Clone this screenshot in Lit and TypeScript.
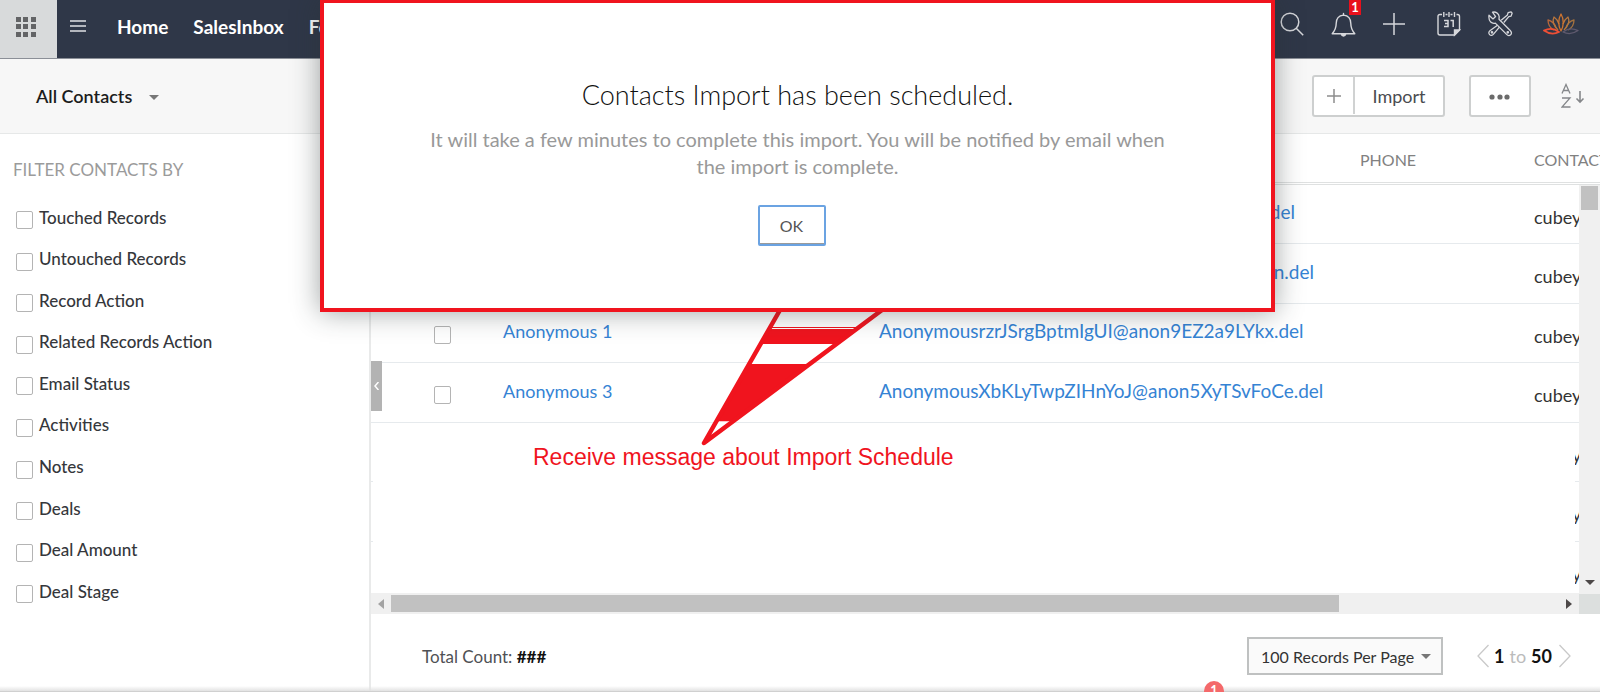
import { LitElement, html, css, svg } from "lit";
import { customElement } from "lit/decorators.js";
import { styleMap } from "lit/directives/style-map.js";

interface Contact {
  name: string;
  email: string;
  width: number;
}

const FILTERS = [
  "Touched Records",
  "Untouched Records",
  "Record Action",
  "Related Records Action",
  "Email Status",
  "Activities",
  "Notes",
  "Deals",
  "Deal Amount",
  "Deal Stage",
];

const CONTACTS: Contact[] = [
  { name: "", email: ".del", width: 416 },
  { name: "", email: "n.del", width: 435 },
  { name: "Anonymous 1", email: "AnonymousrzrJSrgBptmIgUI@anon9EZ2a9LYkx.del", width: 0 },
  { name: "Anonymous 3", email: "AnonymousXbKLyTwpZIHnYoJ@anon5XyTSvFoCe.del", width: 0 },
  { name: "", email: "", width: 0 },
  { name: "", email: "", width: 0 },
  { name: "", email: "", width: 0 },
];

const shared = css`
  * {
    box-sizing: border-box;
  }
  button,
  select,
  input {
    font: inherit;
    margin: 0;
  }
  button {
    display: flex;
    align-items: center;
    justify-content: center;
    padding: 0;
    border: 0;
    background: none;
    color: inherit;
  }
  a {
    color: inherit;
    text-decoration: none;
  }
  svg {
    display: block;
  }
  .check {
    appearance: none;
    flex: none;
    display: block;
    width: 17px;
    height: 18px;
    border: 1px solid #b4b4b4;
    border-radius: 2px;
    background: #fff;
  }
`;

@customElement("crm-top-bar")
class CrmTopBar extends LitElement {
  static styles = [
    shared,
    css`
      :host {
        display: flex;
        height: 59px;
        background: #2f3748;
        border-bottom: 1px solid #8b8f97;
        color: #fff;
      }
      .apps {
        width: 57px;
        padding: 0 5px 4px 0;
        background: #d8dadb;
      }
      .menu {
        width: 42px;
        height: 52px;
      }
      .links {
        display: flex;
        flex: 1;
        gap: 25px;
        padding-left: 18px;
        line-height: 54px;
        font-size: 19px;
        font-weight: 700;
      }
      .tools {
        display: grid;
        grid-template-columns: 52px 50px 52px 58px 44px 78px;
        height: 48px;
      }
      .tools button {
        position: relative;
      }
      .badge {
        position: absolute;
        top: 0;
        right: 7px;
        width: 12px;
        height: 15px;
        background: #e8101c;
        font-size: 13px;
        line-height: 15px;
        font-weight: 700;
        text-align: center;
      }
    `,
  ];

  render() {
    const cells = [0, 7, 15];
    return html`
      <button class="apps" aria-label="Applications">
        <svg width="20" height="20" fill="#636466">
          ${cells.map((y) => cells.map((x) => svg`<rect x=${x} y=${y} width="5" height="5" />`))}
        </svg>
      </button>
      <button class="menu" aria-label="Menu">
        <svg width="16" height="12" stroke="#e0e1e4" stroke-width="1.4">
          <path d="M0 1h16M0 6h16M0 11h16" />
        </svg>
      </button>
      <nav class="links">
        <a href="#home">Home</a>
        <a href="#salesinbox">SalesInbox</a>
        <a href="#feeds">Feeds</a>
      </nav>
      <div class="tools">
        <button aria-label="Search">
          <svg width="24" height="24" fill="none" stroke="#d6d7db" stroke-width="1.5">
            <circle cx="10" cy="10" r="8.8" />
            <path d="M16.2 16.2l7 7" />
          </svg>
        </button>
        <button aria-label="Notifications">
          <svg width="25" height="25" fill="none" stroke="#d6d7db" stroke-width="1.4">
            <path d="M12.5 1.5v1.6C7.500 3.600 5.200 7 5.200 11.500c0 5-1.200 7-4 10.200h22.600c-2.800-3.200-4-5.200-4-10.200 0-4.500-2.300-7.900-7.300-8.400z" stroke-linejoin="round" />
            <path d="M10.500 22.500c.3 2 3.700 2 4 0z" fill="#fff" />
          </svg>
          <span class="badge">1</span>
        </button>
        <button aria-label="Create">
          <svg width="22" height="22" stroke="#d6d7db" stroke-width="1.500"><path d="M11 0v22M0 11h22" /></svg>
        </button>
        <button aria-label="Calendar">
          <svg width="24" height="26" fill="none" stroke="#d6d7db" stroke-width="1.400">
            <path d="M5 3.500H3q-2 0-2 2V22q0 2 2 2h14.500l5-5V5.500q0-2-2-2h-1M8.500 3.500h2M13.500 3.500h2M6.800 1v5M12 1v5M17.500 1v5" />
            <path d="M17.500 24v-5h5z" fill="#d6d7db" />
            <path d="M7 9.500h4v6H7M8 12.400h3M13.500 9.500h2.700v6.500" stroke-width="1.500" />
          </svg>
        </button>
        <button aria-label="Setup">
          <svg width="26" height="26" viewBox="0 0 26 26" fill="none" stroke="#d6d7db" stroke-width="1.300" stroke-linejoin="round">
            <path d="M2 4.200l4 3.700 2.600-2.300L5.500 1.200c3-.8 6.500 1 6.700 4.600l-.2 2.400 11.200 11.300c1.700 1.700 1.500 3.200.4 4.300-1.200 1.100-2.700 1-4-.4L8.300 12.100c-3 .8-7.200-1-6.300-7.900z" />
            <path d="M14.200 9.200l6.200-5.300.7-2.200 3-.8 1 1.300-1 2.900-2.300.6-5 5.800M10.500 14.300l-7.300 5.200c-1.700 1.300-1.700 3-.6 4.100 1.200 1.200 2.800 1 3.900-.4l5.900-7" />
            <circle cx="5" cy="21.300" r=".7" /><circle cx="20.800" cy="21.300" r=".7" />
          </svg>
        </button>
        <button aria-label="Organization">
          <svg width="36" height="22" viewBox="0 0 36 22" fill="none" stroke-width="1.300" stroke-linejoin="round">
            <path d="M11 17C7 15 5 11 5 7c4 1 7 4 8 8" stroke="#b8683c" />
            <path d="M25 17c4-2 6-6 6-10-4 1-7 4-8 8" stroke="#a5733f" />
            <path d="M15 17C10 12 9 8 11 4c3 2 4 4 5 7" stroke="#b9763d" />
            <path d="M21 17c5-5 6-9 4-13-3 2-4 4-5 7" stroke="#b5783f" />
            <path d="M18 18c-3-5-3-12 0-17 3 5 3 12 0 17z" stroke="#d0752f" />
            <path d="M16 19C11 15 6 15 1 17.500c5 3.500 11 3.500 15 1.500z" stroke="#ee4f35" stroke-width="1.800" />
            <path d="M20 19c5-4 10-4 15-1.500-5 3.500-11 3.500-15 1.500z" stroke="#5f5a6e" />
          </svg>
        </button>
      </div>
    `;
  }
}

@customElement("crm-toolbar")
class CrmToolbar extends LitElement {
  static styles = [
    shared,
    css`
      :host {
        display: flex;
        align-items: center;
        justify-content: space-between;
        height: 75px;
        padding: 0 15px 0 36px;
        background: #f7f7f7;
        border-bottom: 1px solid #e6e8e8;
      }
      .view {
        gap: 17px;
        font-size: 18px;
        font-weight: 600;
        color: #1c1c1c;
      }
      .actions {
        display: flex;
        align-items: center;
      }
      .split {
        display: flex;
        height: 42px;
        border: 2px solid #cdcfcf;
        border-radius: 3px;
        background: #fff;
      }
      .plus {
        width: 41px;
        height: 37px;
        border-right: 2px solid #d0d2d2;
      }
      .import {
        width: 88px;
        font-size: 18px;
        color: #4a4c50;
      }
      .more {
        width: 62px;
        height: 42px;
        margin: 0 30px 0 24px;
        border: 2px solid #cdcfcf;
        border-radius: 3px;
        background: #fff;
      }
    `,
  ];

  render() {
    return html`
      <button class="view">
        All Contacts
        <svg width="10" height="8"><path d="M0 3h10l-5 5z" fill="#777" /></svg>
      </button>
      <div class="actions">
        <div class="split">
          <button class="plus" aria-label="Create contact">
            <svg width="14" height="14" stroke="#8d8d8d" stroke-width="1.500"><path d="M7 0v14M0 7h14" /></svg>
          </button>
          <button class="import">Import</button>
        </div>
        <button class="more" aria-label="More actions">
          <svg width="22" height="8" fill="#6b6b6b">
            <circle cx="3" cy="5" r="2.600" /><circle cx="11" cy="5" r="2.600" /><circle cx="18" cy="5" r="2.600" />
          </svg>
        </button>
        <button aria-label="Sort">
          <svg width="24" height="26" fill="none" stroke="#85878a" stroke-width="1.300">
            <path d="M1 10.500L5 1.500l4 9M2.500 7.500h5M1 15h8l-8 9h8.500" />
            <path d="M19 8v11M15.500 15.500l3.500 3.500 3.500-3.500" stroke-width="1.600" />
          </svg>
        </button>
      </div>
    `;
  }
}

@customElement("crm-filters")
class CrmFilters extends LitElement {
  static styles = [
    shared,
    css`
      :host {
        display: block;
        width: 371px;
        border-right: 2px solid #e9eaea;
        background: #fff;
      }
      .title {
        margin: 0;
        padding: 24px 13px;
        font-size: 17px;
        line-height: 24px;
        font-weight: 400;
        color: #9b9b9b;
      }
      .list {
        display: grid;
        grid-auto-rows: 1fr;
        height: 416px;
        margin: 0;
        padding: 0 16px;
        list-style: none;
      }
      .item {
        display: flex;
        align-items: center;
        gap: 6px;
        font-size: 17px;
        line-height: 20px;
        font-weight: 500;
        color: #35373b;
      }
      .item .check {
        margin-top: 5px;
      }
    `,
  ];

  render() {
    return html`
      <h2 class="title">FILTER CONTACTS BY</h2>
      <ul class="list">
        ${FILTERS.map(
          (label) => html`<li><label class="item"><input class="check" type="checkbox" />${label}</label></li>`
        )}
      </ul>
    `;
  }
}

@customElement("crm-contacts")
class CrmContacts extends LitElement {
  static styles = [
    shared,
    css`
      :host {
        position: relative;
        display: flex;
        flex-direction: column;
        flex: 1;
        min-width: 0;
        background: #fff;
      }
      .scroller {
        flex: 1;
        min-height: 0;
        overflow: hidden;
      }
      .grid {
        width: 1400px;
        border-collapse: separate;
        border-spacing: 0;
        table-layout: fixed;
      }
      .c-check { width: 132px; }
      .c-name { width: 376px; }
      .c-email { width: 481px; }
      .c-phone { width: 174px; }
      th {
        height: 51px;
        padding: 2px 0 0;
        border-bottom: 3px double #dfe1e1;
        font-size: 16px;
        font-weight: 400;
        text-align: left;
        color: #818181;
        white-space: nowrap;
      }
      td {
        height: 59px;
        padding: 0 0 4px;
        border-bottom: 1px solid #e6eaed;
        font-size: 18px;
        line-height: 24px;
        white-space: nowrap;
        color: #333;
      }
      tr:nth-child(even) td {
        height: 60px;
      }
      td .check {
        margin: 8px 0 0 63px;
      }
      .link {
        color: #3583d4;
      }
      .mail {
        font-size: 19px;
      }
      .tail {
        display: inline-block;
        text-align: right;
      }
      td.owner {
        padding: 5px 0 0;
      }
      .vbar {
        position: absolute;
        top: 51px;
        right: 0;
        bottom: 98px;
        display: flex;
        flex-direction: column;
        justify-content: space-between;
        align-items: center;
        width: 21px;
        padding: 1px 0 9px;
        background: #f0f0f0;
      }
      .vthumb {
        width: 17px;
        height: 24px;
        background: #c1c1c1;
      }
      .hbar {
        display: flex;
        align-items: center;
        height: 21px;
        background: #f0f0f0;
      }
      .left {
        margin: 0 7px;
      }
      .htrack {
        flex: 1;
      }
      .hthumb {
        width: 81%;
        height: 17px;
        background: #c1c1c1;
      }
      .right {
        margin: 0 7px 0 5px;
      }
      .corner {
        width: 21px;
        height: 21px;
        background: #dcdfde;
      }
      .collapse {
        position: absolute;
        top: 227px;
        left: 0;
        width: 11px;
        height: 50px;
        background: #b3b3b3;
      }
      .footer {
        display: flex;
        align-items: center;
        height: 78px;
        padding: 0 29px 0 51px;
        font-size: 17px;
        color: #4f5155;
      }
      .total {
        flex: 1;
        margin: 6px 0 0;
      }
      .total b,
      .pager b {
        color: #111;
      }
      .pick {
        position: relative;
        display: flex;
        align-items: center;
        margin: 6px 34px 0 0;
      }
      .pick select {
        appearance: none;
        width: 196px;
        height: 38px;
        padding: 0 12px;
        border: 2px solid #bfc1c1;
        border-radius: 0;
        background: #fafafa;
        font-size: 16px;
        color: #333;
      }
      .pick svg {
        position: absolute;
        right: 12px;
        pointer-events: none;
      }
      .pager {
        display: flex;
        align-items: center;
        gap: 5px;
        margin-top: 6px;
        font-size: 18px;
        color: #bbb;
      }
      .next {
        margin-left: 2px;
      }
    `,
  ];

  render() {
    return html`
      <div class="scroller">
        <table class="grid">
          <colgroup>
            <col class="c-check" /><col class="c-name" /><col class="c-email" /><col class="c-phone" /><col />
          </colgroup>
          <thead>
            <tr><th></th><th></th><th></th><th>PHONE</th><th>CONTACT</th></tr>
          </thead>
          <tbody>
            ${CONTACTS.map(
              (c) => html`<tr>
                <td><input class="check" type="checkbox" aria-label="Select contact" /></td>
                <td>${c.name ? html`<a class="link" href="#contact">${c.name}</a>` : ""}</td>
                <td>
                  ${c.width
                    ? html`<a class="link mail tail" href="#mail" style=${styleMap({ width: `${c.width}px` })}>${c.email}</a>`
                    : c.email
                      ? html`<a class="link mail" href="#mail">${c.email}</a>`
                      : ""}
                </td>
                <td></td>
                <td class="owner">cubey</td>
              </tr>`
            )}
          </tbody>
        </table>
      </div>
      <div class="vbar">
        <div class="vthumb"></div>
        <svg width="10" height="5"><path d="M0 0h10l-5 5z" fill="#4d4848" /></svg>
      </div>
      <div class="hbar">
        <svg class="left" width="6" height="10"><path d="M6 0v10L0 5z" fill="#a3a3a3" /></svg>
        <div class="htrack"><div class="hthumb"></div></div>
        <svg class="right" width="6" height="10"><path d="M0 0v10l6-5z" fill="#4d4848" /></svg>
        <div class="corner"></div>
      </div>
      <button class="collapse" aria-label="Collapse filters">
        <svg width="5" height="8" fill="none" stroke="#fff" stroke-width="1.500"><path d="M4.500 0L1 4l3.500 4" /></svg>
      </button>
      <div class="footer">
        <p class="total">Total Count: <b>###</b></p>
        <label class="pick">
          <select aria-label="Records per page"><option>100 Records Per Page</option></select>
          <svg width="10" height="5"><path d="M0 0h10l-5 5z" fill="#777" /></svg>
        </label>
        <div class="pager">
          <button aria-label="Previous page">
            <svg width="12" height="24" fill="none" stroke="#c9c9c9" stroke-width="1.300"><path d="M11.500 1L1 12l10.500 11" /></svg>
          </button>
          <b>1</b><span>to</span><b>50</b>
          <button class="next" aria-label="Next page">
            <svg width="12" height="24" fill="none" stroke="#c9c9c9" stroke-width="1.300"><path d="M.5 1L11 12 .5 23" /></svg>
          </button>
        </div>
      </div>
    `;
  }
}

@customElement("app-root")
class AppRoot extends LitElement {
  static styles = [
    shared,
    css`
      :host {
        position: relative;
        display: flex;
        flex-direction: column;
        height: 100vh;
        overflow: hidden;
        font-family: Lato, "Open Sans", sans-serif;
        background: #fff;
      }
      .body {
        display: flex;
        flex: 1;
        min-height: 0;
      }
      .edge {
        position: absolute;
        left: 0;
        right: 0;
        bottom: 0;
        height: 6px;
        background: linear-gradient(#fff0, #e2e2e2);
        border-bottom: 1px solid #d0d0d0;
      }
      .count {
        position: absolute;
        left: 1204px;
        bottom: -9px;
        width: 20px;
        height: 20px;
        border-radius: 50%;
        background: #f4696a;
        color: #fff;
        font-size: 13px;
        line-height: 18px;
        font-weight: 700;
        text-align: center;
      }
      .note {
        position: absolute;
        top: 423px;
        left: 373px;
        right: 25px;
        bottom: 100px;
        padding: 19px 0 0 160px;
        background: #fff;
        font-family: "Liberation Sans", Arial, sans-serif;
        font-size: 23px;
        line-height: 30px;
        color: #f0141e;
      }
      .pointer {
        position: absolute;
        top: 300px;
        left: 690px;
      }
      .dialog {
        position: absolute;
        top: 0;
        left: 20%;
        display: flex;
        flex-direction: column;
        align-items: center;
        width: 955px;
        height: 312px;
        padding: 73px 100px 0;
        border: 4px solid #f0141e;
        border-top-width: 3px;
        background: #fff;
        box-shadow: 0 0 26px rgba(40, 50, 50, 0.45);
        text-align: center;
      }
      .headline {
        margin: 0;
        font-size: 27px;
        line-height: 38px;
        font-weight: 300;
        color: #111;
      }
      .text {
        margin: 12px 0 25px;
        font-size: 20px;
        line-height: 27px;
        color: #999;
      }
      .ok {
        width: 68px;
        height: 41px;
        margin-right: 12px;
        border: 2px solid #6ba3e2;
        border-radius: 2px;
        box-shadow: inset 0 -1px #9a9a9a;
        font-size: 16px;
        color: #555;
      }
    `,
  ];

  render() {
    return html`
      <crm-top-bar></crm-top-bar>
      <crm-toolbar></crm-toolbar>
      <div class="body">
        <crm-filters></crm-filters>
        <crm-contacts></crm-contacts>
      </div>
      <div class="edge"></div>
      <span class="count">1</span>
      <div class="note">Receive message about Import Schedule</div>
      <svg class="pointer" width="210" height="150" viewBox="690 300 210 150">
        <path d="M761 344h75l-26 20h-61z" fill="#fff" />
        <path d="M770 327.500h89" stroke="#f0141e" />
        <path d="M769 329h88l-21 15h-75zM749 364h61l-77 57.500h-17z" fill="#f0141e" />
        <path d="M716 421.500h17l-29 21.500z" fill="#fff" />
        <path d="M780 310L704 443 882 310" fill="none" stroke="#f0141e" stroke-width="4.500" stroke-linejoin="round" />
      </svg>
      <section class="dialog" role="dialog" aria-labelledby="headline">
        <h1 class="headline" id="headline">Contacts Import has been scheduled.</h1>
        <p class="text">
          It will take a few minutes to complete this import. You will be notified by email when the import is complete.
        </p>
        <button class="ok">OK</button>
      </section>
    `;
  }
}
